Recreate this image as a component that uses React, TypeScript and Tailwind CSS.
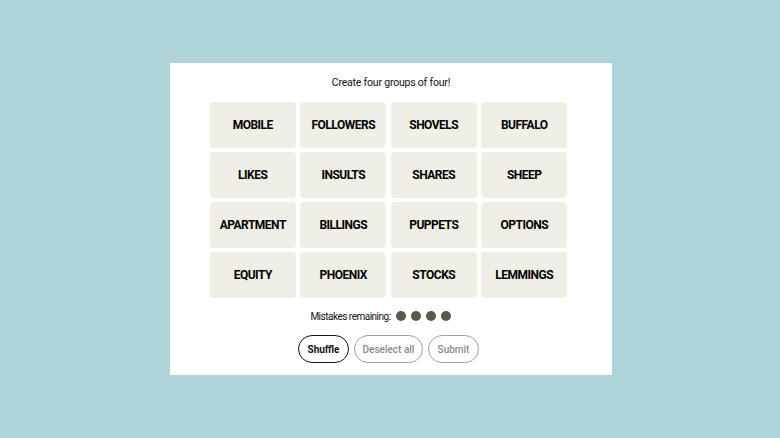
const words = [
  "MOBILE", "FOLLOWERS", "SHOVELS", "BUFFALO",
  "LIKES", "INSULTS", "SHARES", "SHEEP",
  "APARTMENT", "BILLINGS", "PUPPETS", "OPTIONS",
  "EQUITY", "PHOENIX", "STOCKS", "LEMMINGS",
];

export default function App() {
  return (
    <div
      className="w-[780px] h-[438px] bg-[#aed3d9] pt-[63px] pl-[170px]"
      style={{ fontFamily: 'Roboto, "Liberation Sans", Arial, sans-serif' }}
    >
      <div className="w-[442px] h-[312px] bg-white flex flex-col items-center">
        <p className="mt-[13px] text-[10.5px] leading-[13px] tracking-[-0.2px] text-[#121212]">
          Create four groups of four!
        </p>
        <div className="mt-[13px] -ml-[5px] grid grid-cols-[repeat(4,86px)] auto-rows-[46px] gap-x-[4.5px] gap-y-[4px]">
          {words.map((w) => (
            <div
              key={w}
              className="bg-[#efefe6] rounded-[4px] flex items-center justify-center text-[12px] font-bold tracking-[-0.5px] text-black"
            >
              {w}
            </div>
          ))}
        </div>
        <div className="mt-[12px] -ml-[21px] flex items-center h-[12px]">
          <span className="text-[10px] tracking-[-0.5px] text-[#121212] mr-[5px]">Mistakes remaining:</span>
          <div className="flex gap-[5px]">
            {[0, 1, 2, 3].map((i) => (
              <span key={i} className="w-[10px] h-[10px] rounded-full bg-[#5a594e]" />
            ))}
          </div>
        </div>
        <div className="mt-[13px] flex gap-[5px] -ml-[5px]">
          <button className="w-[51px] h-[28px] rounded-full border border-[#121212] text-[10px] font-bold text-[#121212]">
            Shuffle
          </button>
          <button className="w-[69px] h-[28px] rounded-full border border-[#a0a0a0] text-[10px] font-medium text-[#8a8a8a]">
            Deselect all
          </button>
          <button className="w-[51px] h-[28px] rounded-full border border-[#a0a0a0] text-[10px] font-medium text-[#8a8a8a]">
            Submit
          </button>
        </div>
      </div>
    </div>
  );
}
